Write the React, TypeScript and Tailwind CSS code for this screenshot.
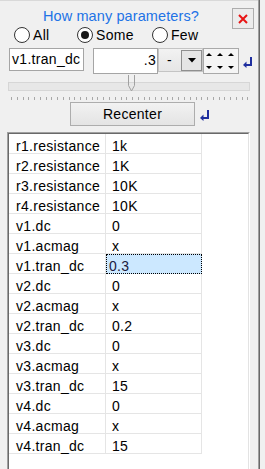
import React from 'react';

const params: [string, string][] = [
  ['r1.resistance', '1k'],
  ['r2.resistance', '1K'],
  ['r3.resistance', '10K'],
  ['r4.resistance', '10K'],
  ['v1.dc', '0'],
  ['v1.acmag', 'x'],
  ['v1.tran_dc', '0.3'],
  ['v2.dc', '0'],
  ['v2.acmag', 'x'],
  ['v2.tran_dc', '0.2'],
  ['v3.dc', '0'],
  ['v3.acmag', 'x'],
  ['v3.tran_dc', '15'],
  ['v4.dc', '0'],
  ['v4.acmag', 'x'],
  ['v4.tran_dc', '15'],
];

const SELECTED = 'v1.tran_dc';

function ReturnArrow({ className = '' }: { className?: string }) {
  return (
    <svg className={className} width="9" height="11" viewBox="0 0 9 11" fill="#1f2f9f">
      <rect x="7" y="0" width="2" height="9" />
      <rect x="3" y="7" width="6" height="2" />
      <polygon points="0,8 3.5,4.5 3.5,11" />
    </svg>
  );
}

function Radio({ label, checked, width }: { label: string; checked?: boolean; width?: string }) {
  return (
    <label className={`flex items-center ${width ?? ''}`}>
      <span className="flex h-[16px] w-[16px] items-center justify-center rounded-full border border-[#333] bg-white">
        {checked && <span className="h-[8px] w-[8px] rounded-full bg-[#1a1a1a]" />}
      </span>
      <span className="ml-[3px]">{label}</span>
    </label>
  );
}

export default function App() {
  const ticks = Array.from({ length: 42 });

  return (
    <div className="flex h-[469px] w-[265px] overflow-hidden bg-[#f0f0f0] font-['Liberation_Sans',Arial,sans-serif] text-[14px] tracking-[0.3px] text-black">
      <div className="flex w-[258px] flex-col border-t border-[#d9d9d9]">
        {/* Header */}
        <div className="flex h-[26px] items-start pt-[7px]">
          <div className="ml-[43px] text-[14.5px] leading-[17px] tracking-[0.1px] text-[#2273e6]">How many parameters?</div>
          <button className="ml-auto mr-[4px] flex h-[21px] w-[22px] items-center justify-center border border-[#adadad] bg-[#ececec]">
            <svg width="10" height="10" viewBox="0 0 10 10" stroke="#e81414" strokeWidth="2">
              <path d="M1 1 L9 9 M9 1 L1 9" />
            </svg>
          </button>
        </div>

        {/* Radio row */}
        <div className="flex h-[16px] items-center pl-[14px] leading-[16px]">
          <Radio label="All" width="w-[63px]" />
          <Radio label="Some" checked width="w-[75px]" />
          <Radio label="Few" />
        </div>

        {/* Inputs row */}
        <div className="mt-[5px] flex items-start">
          <div className="ml-[9px] flex h-[23px] w-[75px] items-center border border-[#a5a5a5] bg-white pl-[2px]">
            v1.tran_dc
          </div>
          <div className="ml-[9px] flex h-[26px] w-[65px] items-center justify-end border border-[#a5a5a5] bg-white pr-[1px] pb-[1px]">
            .3
          </div>
          <div className="flex h-[24px] w-[45px] items-center border border-[#c4c4c4] bg-gradient-to-b from-[#f2f2f2] to-[#e6e6e6]">
            <span className="ml-[8px]">-</span>
            <div className="ml-auto mt-[1px] flex h-[21px] w-[21px] items-center justify-center self-start border border-[#8f8f8f] bg-[#e5e5e5]">
              <svg width="8" height="5" viewBox="0 0 8 5">
                <polygon points="0,0 8,0 4,4.5" fill="#000" />
              </svg>
            </div>
          </div>
          <div className="h-[26px] w-[36px] border border-[#a9a9a9] bg-[#f5f5f5]">
            <svg width="34" height="24" viewBox="0 0 34 24" fill="#000">
              <polygon points="5,4 8,7 2,7" />
              <polygon points="16,4 19,7 13,7" />
              <polygon points="27,4 30,7 24,7" />
              <polygon points="2,17 8,17 5,20" />
              <polygon points="13,17 19,17 16,20" />
              <polygon points="24,17 30,17 27,20" />
            </svg>
          </div>
          <ReturnArrow className="ml-[4px] mt-[9px]" />
        </div>

        {/* Slider */}
        <div className="relative mx-[8px] mt-[8px] h-[9px] border border-[#d6d6d6] bg-[#e7e7e7]">
          <svg className="absolute left-[119px] top-[-8px]" width="7" height="17" viewBox="0 0 7 17" fill="none" stroke="#a0a0a0">
            <path d="M0.5 0 V10.5 L3.5 16 L6.5 10.5 V0" />
          </svg>
        </div>
        <div className="ml-[11px] mt-[6px] flex h-[3px] w-[238px] justify-between">
          {ticks.map((_, i) => (
            <span key={i} className="h-[3px] w-px bg-[#a8a8a8]" />
          ))}
        </div>

        {/* Recenter */}
        <div className="mt-[2px] flex items-center">
          <button className="ml-[70px] flex h-[24px] w-[125px] items-center justify-center border border-[#adadad] bg-gradient-to-b from-[#f2f2f2] to-[#e4e4e4] leading-[17px]">
            Recenter
          </button>
          <ReturnArrow className="ml-[5px] mt-[3px]" />
        </div>

        {/* Parameter table */}
        <div className="ml-[7px] mt-[6px] w-[243px] flex-1 border-l border-r border-t border-[#a0a0a0] border-r-white">
          <div className="h-full border-l border-r border-t border-[#696969] border-r-[#e3e3e3] bg-white">
            {params.map(([name, value]) => {
              const selected = name === SELECTED;
              return (
                <div key={name} className="flex h-[20px] w-[193px] border-b border-[#e5e5e5]">
                  <div className="h-full w-[97px] border-r border-[#e5e5e5] pl-[7px] pt-[2px] leading-[20px]">{name}</div>
                  {selected ? (
                    <div className="h-[20px] w-[96px] border border-dotted border-black bg-[#cce8ff] pl-[2px] pt-[1px] leading-[20px] text-[#1a1a40]">
                      {value}
                    </div>
                  ) : (
                    <div className="h-full w-[96px] border-r border-[#e5e5e5] pl-[6px] pt-[2px] leading-[20px]">{value}</div>
                  )}
                </div>
              );
            })}
          </div>
        </div>
      </div>
      <div className="w-px bg-[#a0a0a0]" />
      <div className="w-px bg-[#696969]" />
      <div className="flex-1" />
    </div>
  );
}
